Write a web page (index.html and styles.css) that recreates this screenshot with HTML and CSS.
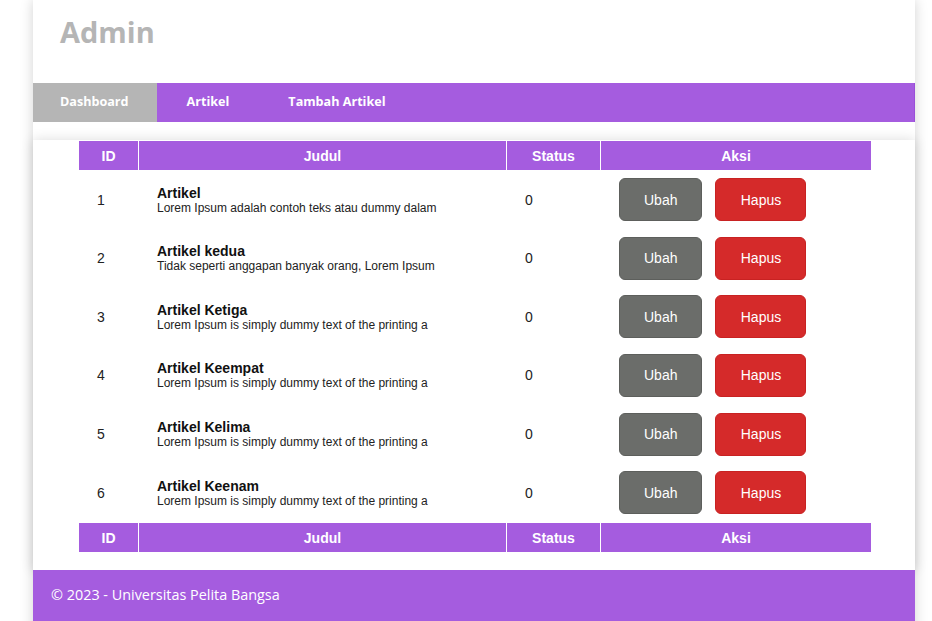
FILE: index.html
```html
<!DOCTYPE html>
<html lang="id">
<head>
<meta charset="utf-8">
<title>Admin</title>
<link rel="stylesheet" href="styles.css">
</head>
<body>
<div class="container">
  <header class="header">
    <h1 class="brand">Admin</h1>
  </header>
  <nav class="nav">
    <a class="nav-link active" href="#">Dashboard</a>
    <a class="nav-link" href="#">Artikel</a>
    <a class="nav-link" href="#">Tambah Artikel</a>
  </nav>
  <main class="main">
    <table class="table">
      <thead>
        <tr><th class="c-id">ID</th><th class="c-judul">Judul</th><th class="c-status">Status</th><th class="c-aksi">Aksi</th></tr>
      </thead>
      <tbody>
        <tr>
          <td>1</td>
          <td><div class="title">Artikel</div><div class="desc">Lorem Ipsum adalah contoh teks atau dummy dalam</div></td>
          <td>0</td>
          <td><div class="actions"><a class="btn btn-edit" href="#">Ubah</a><a class="btn btn-del" href="#">Hapus</a></div></td>
        </tr>
        <tr>
          <td>2</td>
          <td><div class="title">Artikel kedua</div><div class="desc">Tidak seperti anggapan banyak orang, Lorem Ipsum</div></td>
          <td>0</td>
          <td><div class="actions"><a class="btn btn-edit" href="#">Ubah</a><a class="btn btn-del" href="#">Hapus</a></div></td>
        </tr>
        <tr>
          <td>3</td>
          <td><div class="title">Artikel Ketiga</div><div class="desc">Lorem Ipsum is simply dummy text of the printing a</div></td>
          <td>0</td>
          <td><div class="actions"><a class="btn btn-edit" href="#">Ubah</a><a class="btn btn-del" href="#">Hapus</a></div></td>
        </tr>
        <tr>
          <td>4</td>
          <td><div class="title">Artikel Keempat</div><div class="desc">Lorem Ipsum is simply dummy text of the printing a</div></td>
          <td>0</td>
          <td><div class="actions"><a class="btn btn-edit" href="#">Ubah</a><a class="btn btn-del" href="#">Hapus</a></div></td>
        </tr>
        <tr>
          <td>5</td>
          <td><div class="title">Artikel Kelima</div><div class="desc">Lorem Ipsum is simply dummy text of the printing a</div></td>
          <td>0</td>
          <td><div class="actions"><a class="btn btn-edit" href="#">Ubah</a><a class="btn btn-del" href="#">Hapus</a></div></td>
        </tr>
        <tr>
          <td>6</td>
          <td><div class="title">Artikel Keenam</div><div class="desc">Lorem Ipsum is simply dummy text of the printing a</div></td>
          <td>0</td>
          <td><div class="actions"><a class="btn btn-edit" href="#">Ubah</a><a class="btn btn-del" href="#">Hapus</a></div></td>
        </tr>
      </tbody>
      <tfoot>
        <tr><th>ID</th><th>Judul</th><th>Status</th><th>Aksi</th></tr>
      </tfoot>
    </table>
  </main>
  <footer class="footer">© 2023 - Universitas Pelita Bangsa</footer>
</div>
</body>
</html>
```
FILE: styles.css
```css
* { box-sizing: border-box; }
html, body { margin: 0; padding: 0; background: #fff; }
body { font-family: "Open Sans", sans-serif; overflow: hidden; }

.container {
  width: 882px;
  margin-left: 33px;
  background: #fff;
  box-shadow: 0 0 12px rgba(0, 0, 0, 0.18);
  min-height: 640px;
}

.header {
  height: 83px;
  padding: 12px 0 0 27px;
}
.brand {
  margin: 0;
  font-size: 29px;
  line-height: 40px;
  font-weight: 700;
  color: #b5b5b5;
}

.nav {
  display: flex;
  height: 39px;
  background: #a55cdf;
  border-right: 1px solid #9a4fd8;
}
.nav-link {
  display: flex;
  align-items: center;
  padding: 0 28px 3px 27px;
  color: #fff;
  font-weight: 700;
  font-size: 12.6px;
  text-decoration: none;
}
.nav-link.active { background: #b5b5b5; }
.nav-link + .nav-link { padding: 0 29px 3px 30px; }

.main {
  margin-top: 18px;
  padding: 0 0 17px 0;
  background: #fff;
  box-shadow: 0 0 12px rgba(0, 0, 0, 0.14);
}

.table {
  width: 794px;
  margin-left: 45px;
  table-layout: fixed;
  border-collapse: separate;
  border-spacing: 1px;
  font-family: "Liberation Sans", Arial, sans-serif;
}
.c-id { width: 59px; }
.c-judul { width: 367px; }
.c-status { width: 93px; }
.c-aksi { width: 270px; }

.table th {
  background: #a55cdf;
  color: #fff;
  font-size: 14px;
  font-weight: 700;
  line-height: 17px;
  padding: 7px 0 5px;
  text-align: center;
}
.table td {
  padding: 7px 18px 7.67px 18px;
  vertical-align: middle;
  font-size: 14px;
  color: #222;
  text-align: left;
}
.title {
  font-size: 14px;
  font-weight: 700;
  line-height: 16px;
  color: #111;
}
.desc {
  font-size: 12px;
  line-height: 14px;
  color: #222;
}

.actions { display: flex; gap: 13px; }
.btn {
  display: inline-flex;
  align-items: center;
  justify-content: center;
  height: 43px;
  padding: 0 24px;
  border-radius: 6px;
  color: #fff;
  font-size: 14px;
  text-decoration: none;
}
.btn-edit { background: #6b6d6a; border: 1px solid #5d5f5c; }
.btn-del { background: #d52a2a; border: 1px solid #c82222; width: 91px; padding: 0; }

.footer {
  margin-top: 0;
  background: #a55cdf;
  color: #fff;
  font-size: 14.4px;
  line-height: 20px;
  padding: 15px 18px 40px 18px;
}
```
